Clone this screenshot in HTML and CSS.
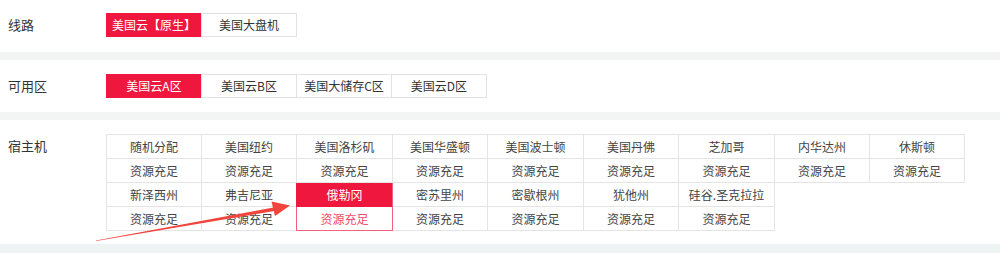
FILE: index.html
```html
<!DOCTYPE html>
<html lang="zh-CN">

<head>
    <meta charset="UTF-8">
    <meta name="viewport" content="width=device-width, initial-scale=1.0">
    <title>选择主机</title>
    <link rel="stylesheet" href="styles.css">
</head>

<body>
    <div class="page">
        <div class="row row-line">
            <div class="label">线路</div>
            <div class="opts">
                <span class="opt on">美国云【原生】</span>
                <span class="opt">美国大盘机</span>
            </div>
        </div>

        <div class="row row-zone">
            <div class="label">可用区</div>
            <div class="opts">
                <span class="opt on">美国云A区</span>
                <span class="opt">美国云B区</span>
                <span class="opt">美国大储存C区</span>
                <span class="opt">美国云D区</span>
            </div>
        </div>

        <div class="row row-host">
            <div class="label">宿主机</div>
            <div class="hosts">
                <div class="host"><p>随机分配</p><p>资源充足</p></div>
                <div class="host"><p>美国纽约</p><p>资源充足</p></div>
                <div class="host"><p>美国洛杉矶</p><p>资源充足</p></div>
                <div class="host"><p>美国华盛顿</p><p>资源充足</p></div>
                <div class="host"><p>美国波士顿</p><p>资源充足</p></div>
                <div class="host"><p>美国丹佛</p><p>资源充足</p></div>
                <div class="host"><p>芝加哥</p><p>资源充足</p></div>
                <div class="host"><p>内华达州</p><p>资源充足</p></div>
                <div class="host"><p>休斯顿</p><p>资源充足</p></div>
                <div class="host"><p>新泽西州</p><p>资源充足</p></div>
                <div class="host"><p>弗吉尼亚</p><p>资源充足</p></div>
                <div class="host on"><p>俄勒冈</p><p>资源充足</p></div>
                <div class="host"><p>密苏里州</p><p>资源充足</p></div>
                <div class="host"><p>密歇根州</p><p>资源充足</p></div>
                <div class="host"><p>犹他州</p><p>资源充足</p></div>
                <div class="host"><p>硅谷.圣克拉拉</p><p>资源充足</p></div>
            </div>
        </div>

        <!-- 标注箭头 -->
        <svg class="arrow" width="1000" height="253" viewBox="0 0 1000 253">
            <polygon points="96,240.5 273.5,207.5 274.5,211 96,241" fill="#f0443c" />
            <polygon points="290,205.5 271.5,201.5 275,216" fill="#f0443c" />
        </svg>
    </div>
</body>

</html>
```

FILE: styles.css
```css
body {
    margin: 0;
    background: #eef3f3;
    font-family: "Microsoft YaHei", "Noto Sans CJK SC", sans-serif;
    color: #333;
}

.page {
    position: relative;
    width: 1000px;
    height: 253px;
    overflow: hidden;
}

.row {
    display: flex;
    background: #fff;
    box-sizing: border-box;
}

.row-line {
    height: 60px;
    padding-top: 13px;
    border-bottom: 8px solid #f3f4f4;
}

.row-zone {
    height: 60px;
    padding-top: 14px;
    border-bottom: 8px solid #f3f4f4;
}

.row-host {
    height: 124px;
    padding-top: 14px;
}

.label {
    width: 106px;
    padding-left: 8px;
    box-sizing: border-box;
    font-size: 13px;
    line-height: 24px;
    flex-shrink: 0;
}

.opts {
    display: flex;
    height: 24px;
}

.opt {
    width: 96px;
    height: 24px;
    line-height: 22px;
    box-sizing: border-box;
    border: 1px solid #e2e2e2;
    margin-left: -1px;
    text-align: center;
    font-size: 12px;
    color: #333;
    background: #fff;
}

.opt:first-child {
    margin-left: 0;
}

.opt.on {
    background: #f0173f;
    border-color: #f0173f;
    color: #fff;
}

.hosts {
    display: grid;
    grid-template-columns: 96px 95px 96px 95px 96px 95px 96px 95px 95px;
    align-content: start;
}

.host {
    border-right: 1px solid #e4e4e4;
    text-align: center;
    font-size: 12px;
    color: #444;
}

.host:nth-child(-n+9) {
    border-top: 1px solid #e4e4e4;
}

.host:nth-child(9n+1) {
    border-left: 1px solid #e4e4e4;
}

.host p {
    margin: 0;
    height: 23px;
    line-height: 23px;
    border-bottom: 1px solid #e4e4e4;
}

.host.on {
    position: relative;
    margin-left: -1px;
    border-right-color: #f2607c;
}

.host.on p:first-child {
    background: #f0173f;
    color: #fff;
    border-left: 1px solid #f0173f;
    border-bottom-color: #f0173f;
}

.host.on p:last-child {
    color: #f04a6c;
    border-left: 1px solid #f2607c;
    border-bottom-color: #f2607c;
}

.arrow {
    position: absolute;
    left: 0;
    top: 0;
    pointer-events: none;
}
```
